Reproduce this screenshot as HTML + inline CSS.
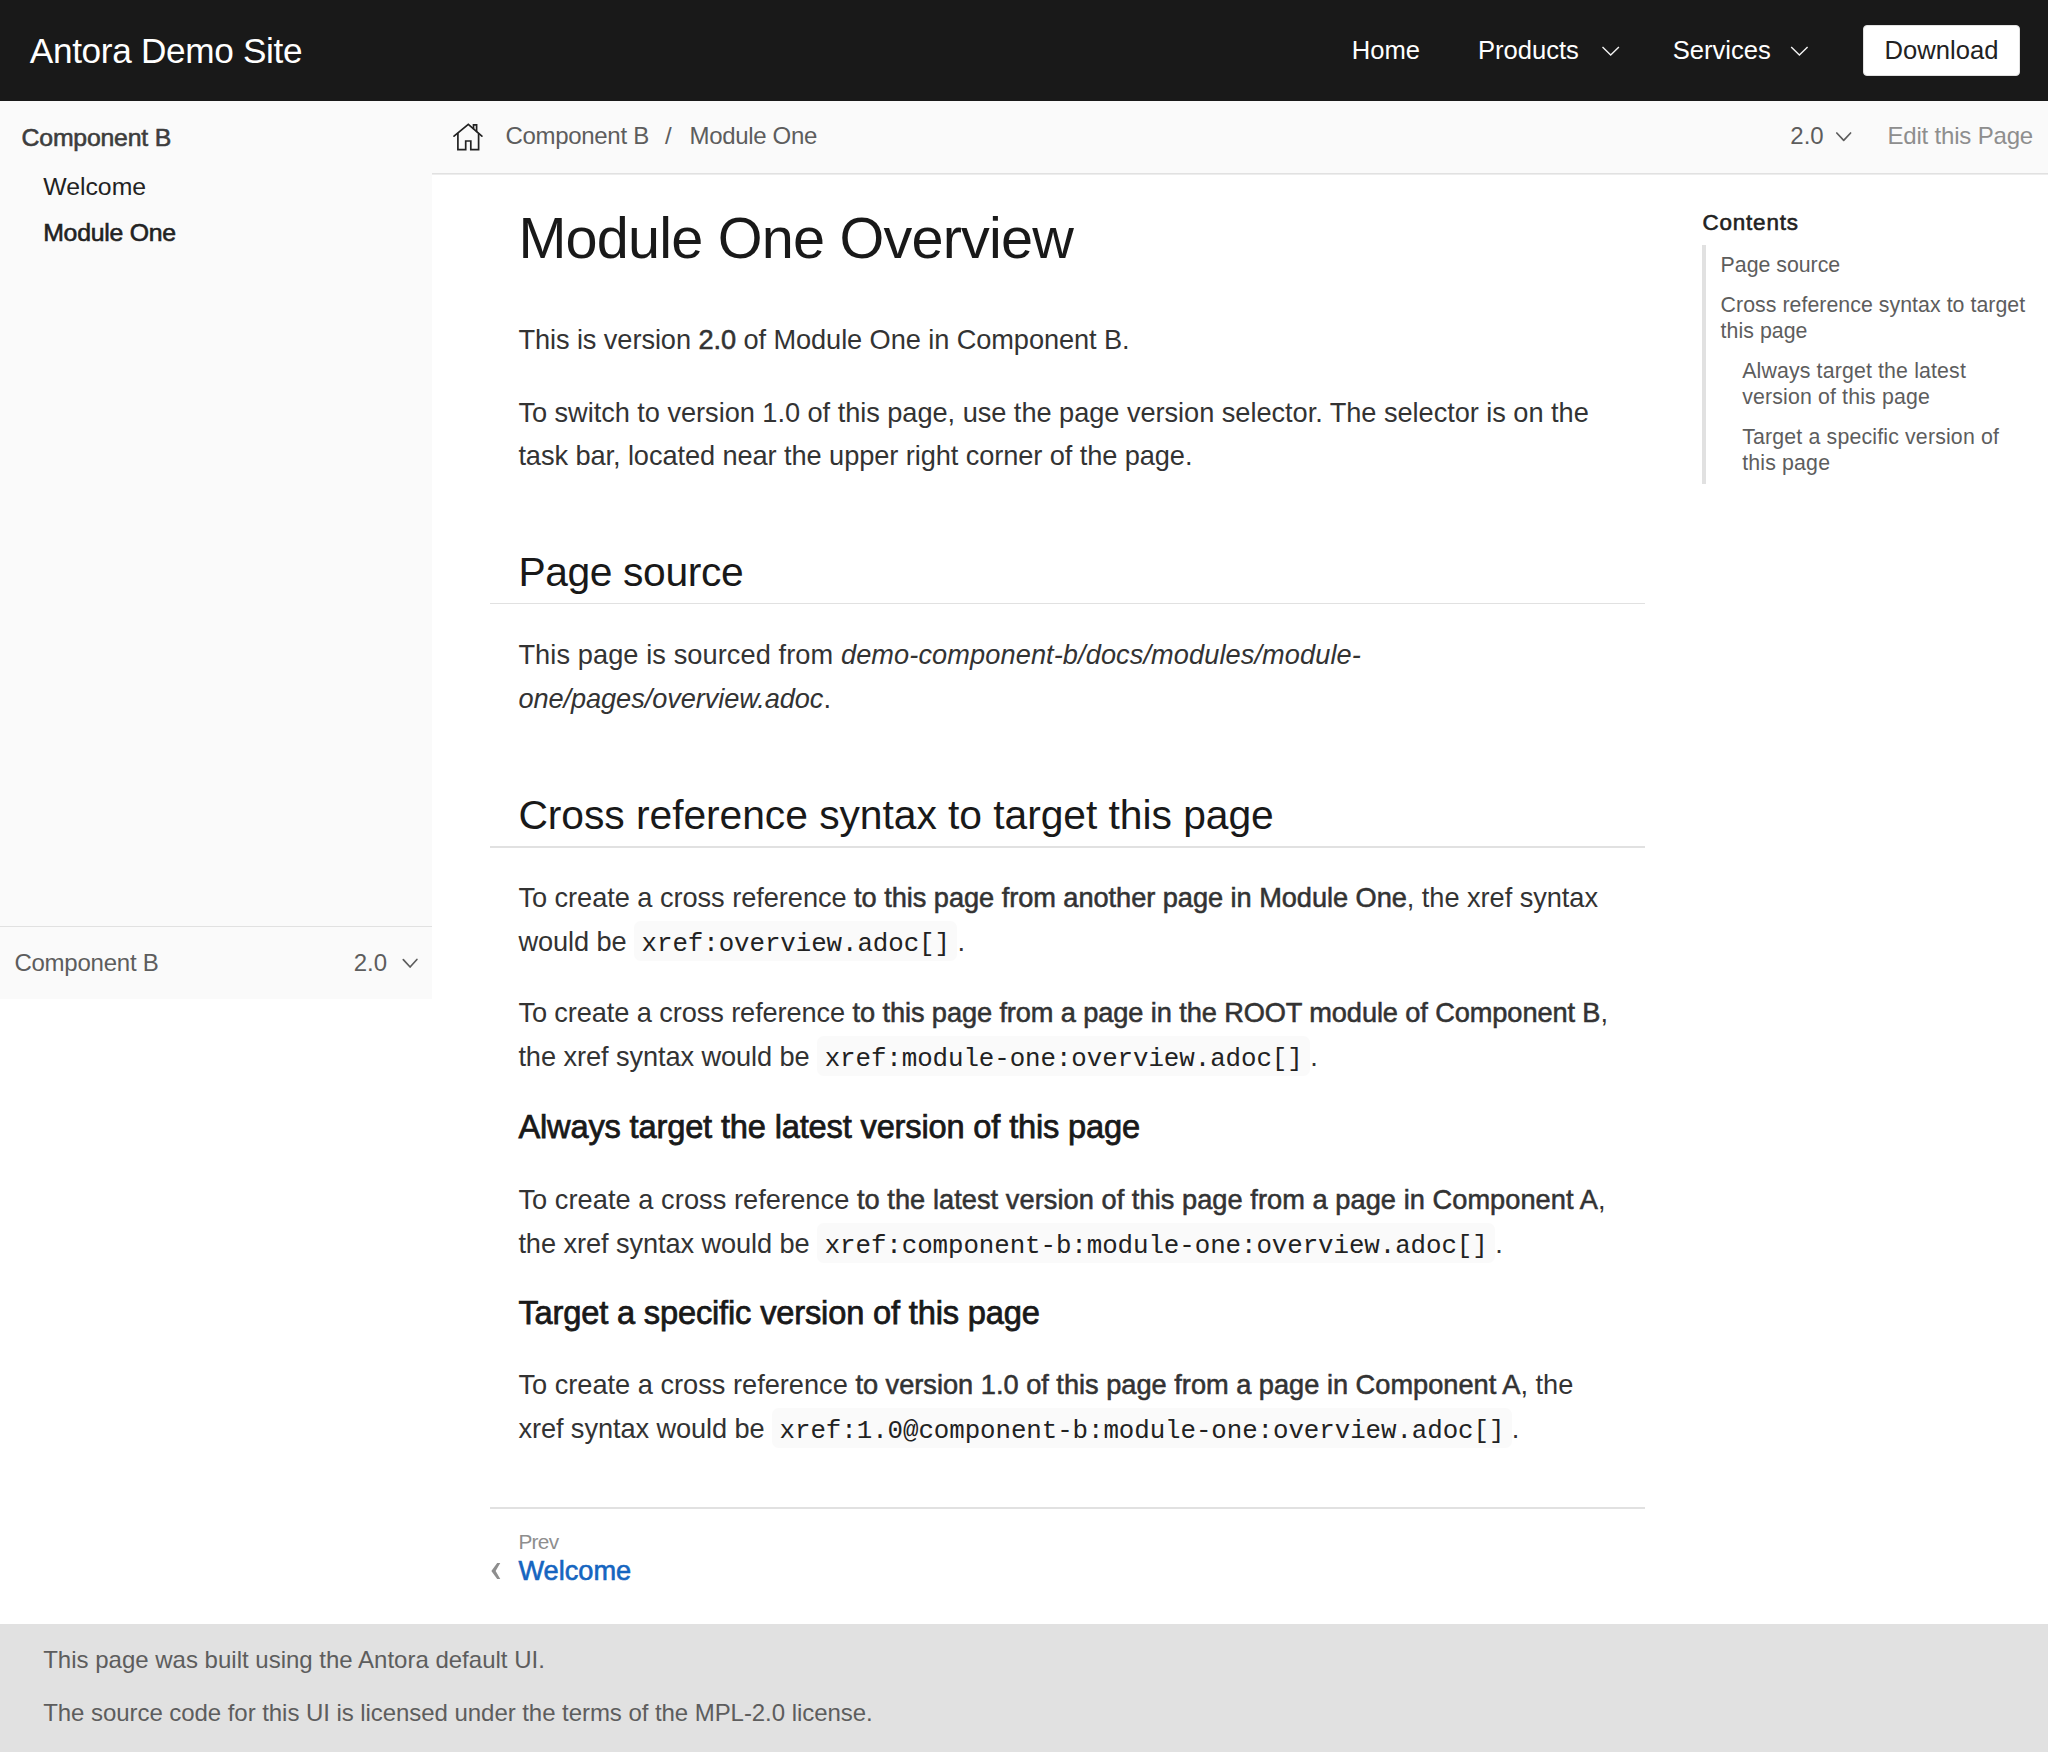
<!DOCTYPE html>
<html><head><meta charset="utf-8"><title>Module One Overview :: Antora Demo Site</title>
<style>
html,body{margin:0;padding:0}
body{width:2048px;height:1752px;overflow:hidden;position:relative;background:#fff;font-family:"Liberation Sans",sans-serif;}
.abs{position:absolute}
.t{position:absolute;white-space:nowrap}
.t b{font-weight:400;-webkit-text-stroke:0.55px currentColor}
.t code{font-family:"Liberation Mono",monospace;font-size:25.84px;background:#fafafa;color:#222;border-radius:6.46px;padding:7.87px 7.5px 2.44px}
</style></head>
<body>

<div class="abs" style="left:0;top:0;width:2048px;height:100.8px;background:#191919"></div>
<div class="abs" style="left:1863.2px;top:24.8px;width:156.4px;height:51.2px;background:#fff;border-radius:4px;box-sizing:border-box;border:1.6px solid #e1e1e1"></div>
<div class="abs" style="left:0;top:100.8px;width:432px;height:898.1px;background:#fafafa"></div>
<div class="abs" style="left:0;top:925.7px;width:432px;height:1.6px;background:#e1e1e1"></div>
<div class="abs" style="left:432px;top:100.8px;width:1616px;height:72px;background:#fafafa;box-shadow:0 1.6px 0 #e1e1e1"></div>
<div class="abs" style="left:489.6px;top:602.9px;width:1155.2px;height:1.6px;background:#e1e1e1"></div>
<div class="abs" style="left:489.6px;top:846.3px;width:1155.2px;height:1.6px;background:#e1e1e1"></div>
<div class="abs" style="left:489.6px;top:1507.3px;width:1155.2px;height:1.6px;background:#e1e1e1"></div>
<div class="abs" style="left:1702.4px;top:245.4px;width:3.2px;height:238.4px;background:#e1e1e1"></div>
<div class="abs" style="left:0;top:1624.4px;width:2048px;height:128px;background:#e1e1e1"></div>
<svg class="abs" style="left:0;top:0" width="2048" height="1752" viewBox="0 0 2048 1752">
<g fill="none" stroke-linecap="butt" stroke-linejoin="miter">
<path d="M1602.5 46.9 L1610.7 55.1 L1618.9 46.9" stroke="#f2f2f2" stroke-width="1.4"/>
<path d="M1791.2 46.9 L1799.4 55.1 L1807.6 46.9" stroke="#f2f2f2" stroke-width="1.4"/>
</g>
<g fill="none" stroke="#5d5d5d" stroke-width="1.7" stroke-linecap="round" stroke-linejoin="round">
<path d="M1836.8 133 L1843.7 140.3 L1850.6 133"/>
<path d="M403.3 959.6 L410.1 967.0 L416.9 959.5"/>
</g>
<polygon points="491.36,1571.07 497.18,1563.02 500.27,1563.02 495.64,1571.07 500.27,1578.95 497.18,1578.95" fill="#8e8e8e"/>
</svg>
<svg class="abs" style="left:448px;top:118px" width="42" height="38" viewBox="0 0 42 38"><g fill="none" stroke="#222" stroke-width="1.7" stroke-linejoin="miter" stroke-linecap="round"><path d="M6 18.2 L20.3 6.3 L33.9 18.2"/><path d="M9.9 15.6 V31.7 H17.7 V23 H22.8 V31.7 H30.6 V15.6"/><path d="M25.5 10.6 V6.9 H28.6 V13.4"/></g></svg>

<div class="t " style="left:29.80px;top:28.02px;font-size:35.2px;line-height:45.76px;color:#fff;letter-spacing:-0.33px;">Antora Demo Site</div>
<div class="t " style="left:1351.70px;top:33.66px;font-size:25.6px;line-height:33.28px;color:#fff;">Home</div>
<div class="t " style="left:1477.90px;top:33.66px;font-size:25.6px;line-height:33.28px;color:#fff;">Products</div>
<div class="t " style="left:1672.70px;top:33.66px;font-size:25.6px;line-height:33.28px;color:#fff;">Services</div>
<div class="t " style="left:1884.60px;top:33.96px;font-size:25.6px;line-height:33.28px;color:#222;">Download</div>
<div class="t " style="left:21.60px;top:122.18px;font-size:24.8px;line-height:32.24px;color:#3d3d3d;-webkit-text-stroke:0.6px currentColor;letter-spacing:-0.2px;">Component B</div>
<div class="t " style="left:43.20px;top:170.98px;font-size:24.8px;line-height:32.24px;color:#222;">Welcome</div>
<div class="t " style="left:43.20px;top:216.88px;font-size:24.8px;line-height:32.24px;color:#222;-webkit-text-stroke:0.6px currentColor;letter-spacing:-0.24px;">Module One</div>
<div class="t " style="left:14.40px;top:946.60px;font-size:24px;line-height:31.2px;color:#5d5d5d;letter-spacing:-0.24px;">Component B</div>
<div class="t " style="left:353.70px;top:946.60px;font-size:24px;line-height:31.2px;color:#5d5d5d;">2.0</div>
<div class="t " style="left:505.40px;top:120.00px;font-size:24px;line-height:31.2px;color:#5d5d5d;letter-spacing:-0.3px;">Component B</div>
<div class="t " style="left:665.10px;top:120.00px;font-size:24px;line-height:31.2px;color:#5d5d5d;">/</div>
<div class="t " style="left:689.50px;top:120.00px;font-size:24px;line-height:31.2px;color:#5d5d5d;letter-spacing:-0.33px;">Module One</div>
<div class="t " style="left:1790.30px;top:120.20px;font-size:24px;line-height:31.2px;color:#5d5d5d;">2.0</div>
<div class="t " style="left:1887.40px;top:120.20px;font-size:24px;line-height:31.2px;color:#8e8e8e;letter-spacing:-0.18px;">Edit this Page</div>
<div class="t " style="left:518.40px;top:201.06px;font-size:57.6px;line-height:74.88px;color:#191919;letter-spacing:-0.79px;">Module One Overview</div>
<div class="t " style="left:518.40px;top:318.04px;font-size:27.2px;line-height:43.52px;color:#333;letter-spacing:-0.08px;">This is version <b>2.0</b> of Module One in Component B.</div>
<div class="t " style="left:518.40px;top:390.94px;font-size:27.2px;line-height:43.52px;color:#333;letter-spacing:-0.08px;"><span style="letter-spacing:-0.04px">To switch to version 1.0 of this page, use the page version selector. The selector is on the</span><br>task bar, located near the upper right corner of the page.</div>
<div class="t " style="left:518.40px;top:546.08px;font-size:40.8px;line-height:53.04px;color:#191919;letter-spacing:-0.38px;">Page source</div>
<div class="t " style="left:518.40px;top:633.24px;font-size:27.2px;line-height:43.52px;color:#333;letter-spacing:-0.08px;"><span style="letter-spacing:0.085px">This page is sourced from <i>demo-component-b/docs/modules/module-</i></span><br><i>one/pages/overview.adoc</i>.</div>
<div class="t " style="left:518.40px;top:789.38px;font-size:40.8px;line-height:53.04px;color:#191919;letter-spacing:-0.05px;">Cross reference syntax to target this page</div>
<div class="t " style="left:518.40px;top:876.34px;font-size:27.2px;line-height:43.52px;color:#333;letter-spacing:-0.08px;"><span style="letter-spacing:-0.045px">To create a cross reference <b>to this page from another page in Module One</b>, the xref syntax</span><br>would be <code>xref:overview.adoc[]</code>.</div>
<div class="t " style="left:518.40px;top:991.24px;font-size:27.2px;line-height:43.52px;color:#333;letter-spacing:-0.08px;"><span style="letter-spacing:-0.1px">To create a cross reference <b>to this page from a page in the ROOT module of Component B</b>,</span><br>the xref syntax would be <code>xref:module-one:overview.adoc[]</code>.</div>
<div class="t " style="left:518.40px;top:1105.99px;font-size:32.64px;line-height:42.43px;color:#191919;-webkit-text-stroke:0.75px currentColor;letter-spacing:-0.17px;">Always target the latest version of this page</div>
<div class="t " style="left:518.40px;top:1178.34px;font-size:27.2px;line-height:43.52px;color:#333;letter-spacing:-0.08px;"><span style="letter-spacing:0.056px">To create a cross reference <b>to the latest version of this page from a page in Component A</b>,</span><br>the xref syntax would be <code>xref:component-b:module-one:overview.adoc[]</code>.</div>
<div class="t " style="left:518.40px;top:1292.09px;font-size:32.64px;line-height:42.43px;color:#191919;-webkit-text-stroke:0.75px currentColor;letter-spacing:-0.17px;">Target a specific version of this page</div>
<div class="t " style="left:518.40px;top:1363.44px;font-size:27.2px;line-height:43.52px;color:#333;letter-spacing:-0.08px;"><span style="letter-spacing:0.0px">To create a cross reference <b>to version 1.0 of this page from a page in Component A</b>, the</span><br>xref syntax would be <code>xref:1.0@component-b:module-one:overview.adoc[]</code>.</div>
<div class="t " style="left:518.40px;top:1527.58px;font-size:20.8px;line-height:27.04px;color:#8e8e8e;letter-spacing:-0.7px;">Prev</div>
<div class="t " style="left:518.40px;top:1553.12px;font-size:27.2px;line-height:35.36px;color:#1565c0;-webkit-text-stroke:0.6px currentColor;">Welcome</div>
<div class="t " style="left:43.20px;top:1640.80px;font-size:24px;line-height:38.4px;color:#5d5d5d;">This page was built using the Antora default UI.</div>
<div class="t " style="left:43.20px;top:1693.90px;font-size:24px;line-height:38.4px;color:#5d5d5d;letter-spacing:-0.055px;">The source code for this UI is licensed under the terms of the MPL-2.0 license.</div>
<div class="t " style="left:1702.40px;top:208.24px;font-size:22.4px;line-height:29.12px;color:#222;-webkit-text-stroke:0.6px currentColor;letter-spacing:0.85px;">Contents</div>
<div class="t " style="left:1720.60px;top:252.65px;font-size:21.3px;line-height:25.5px;color:#5d5d5d;">Page source</div>
<div class="t " style="left:1720.60px;top:293.05px;font-size:21.3px;line-height:25.5px;color:#5d5d5d;letter-spacing:0.05px;">Cross reference syntax to target<br>this page</div>
<div class="t " style="left:1742.20px;top:359.25px;font-size:21.3px;line-height:25.5px;color:#5d5d5d;letter-spacing:0.15px;">Always target the latest<br>version of this page</div>
<div class="t " style="left:1742.20px;top:425.25px;font-size:21.3px;line-height:25.5px;color:#5d5d5d;letter-spacing:0.17px;">Target a specific version of<br>this page</div>
</body></html>
